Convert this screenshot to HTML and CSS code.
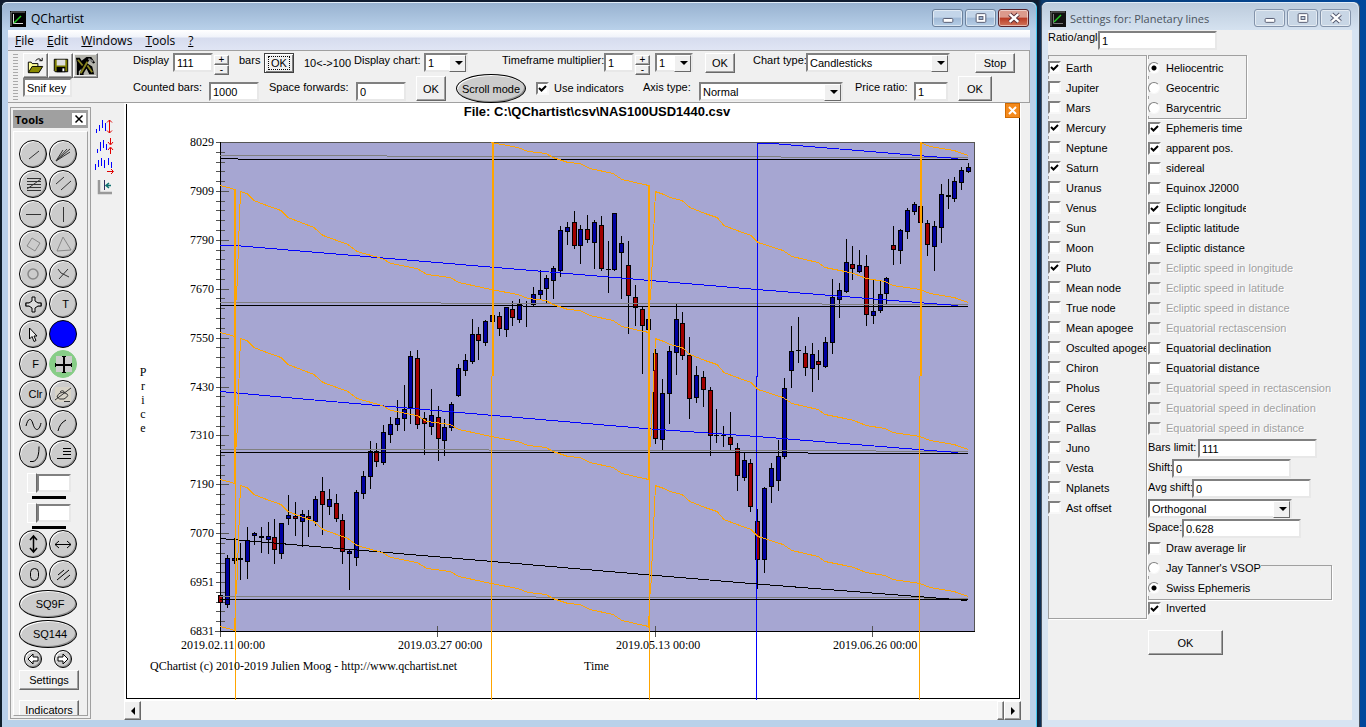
FILE: index.html
```html
<!DOCTYPE html>
<html lang="en">
<head>
    <meta charset="utf-8">
    <title>QChartist</title>
    <link rel="stylesheet" href="styles.css">
</head>
<body>
    <main class="window main-window">
        <header class="titlebar">
            <svg class="app-icon" viewBox="0 0 16 16"><rect width="16" height="16" fill="#000"/><path d="M1 15V1h14" stroke="#888" fill="none"/><path d="M3.5 3v9.5H13" stroke="#ddd" fill="none"/><path d="M4 12l7-7" stroke="#2c2" stroke-width="1.5"/></svg>
            <h1>QChartist</h1>
            <div class="window-buttons">
                <button type="button" aria-label="Minimize"><svg viewBox="0 0 30 16"><rect x="10.5" y="8.5" width="10" height="4" rx="1" fill="#fff" stroke="#555a70"/></svg></button>
                <button type="button" aria-label="Maximize"><svg viewBox="0 0 30 16"><rect x="10.5" y="3.5" width="10" height="9" rx="1" fill="#fff" stroke="#555a70"/><rect x="13.5" y="6.5" width="4" height="3" fill="#9fb6d2" stroke="#555a70"/></svg></button>
                <button type="button" class="close" aria-label="Close"><svg viewBox="0 0 30 16"><path d="M11 4l9 8M20 4l-9 8" stroke="#5b3038" stroke-width="4.5"/><path d="M11 4l9 8M20 4l-9 8" stroke="#fff" stroke-width="2.5"/></svg></button>
            </div>
        </header>

        <nav class="menubar">
            <a href="#"><u>F</u>ile</a>
            <a href="#"><u>E</u>dit</a>
            <a href="#"><u>W</u>indows</a>
            <a href="#"><u>T</u>ools</a>
            <a href="#"><u>?</u></a>
        </nav>

        <section class="toolbar">
            <div class="grip"></div>
            <div class="file-tools">
                <div class="file-buttons">
                    <button type="button" class="btn" aria-label="Open"><svg viewBox="0 0 24 24"><path d="M4.5 19V8.5h3l1 1.5h6v3" fill="#ff9" stroke="#000"/><path d="M4.5 19.5l4-6.5h11l-4 6.5z" fill="#8a8a00" stroke="#000"/><path d="M12 7q4-4 6 0m1-3v3h-3" fill="none" stroke="#000"/></svg></button>
                    <button type="button" class="btn" aria-label="Save"><svg viewBox="0 0 24 24"><path d="M5.5 5.5h14v13h-13l-1-1z" fill="#7c7c00" stroke="#000"/><path d="M8 6h9v6H8z" fill="#ddd"/><path d="M8 13.5h9V19H8z" fill="#000"/><path d="M14 15h2v3h-2z" fill="#fff"/></svg></button>
                    <button type="button" class="btn" aria-label="Edit indicators"><svg viewBox="0 0 24 24"><rect x="1" y="1" width="22" height="21" fill="#b5b5ad"/><path d="M2 4h4l2 3 5-4h5l4 6-2 1-4-4-2 4 5 3 2 8h-5l-3-6-3 5v2H6l2-7-3 3v4H3V9z" fill="#000"/><path d="M4 6l5 6M7 20l7-12M14 12l5 7" stroke="#898420" stroke-width="2"/><path d="M15 5l5 3" stroke="#888" stroke-width="2"/></svg></button>
                </div>
                <input class="field snif" type="text" value="Snif key" aria-label="Snif key">
            </div>
            <div class="toolbar-rows">
                <div class="tool-row">
                    <label class="cap cap-display" for="display">Display</label>
                    <input class="field w40" id="display" type="text" value="111">
                    <div class="spin"><button type="button" class="btn">+</button><button type="button" class="btn">-</button></div>
                    <span class="cap cap-bars">bars</span>
                    <button type="button" class="btn ok default"><span>OK</span></button>
                    <span class="cap low cap-range">10&lt;-&gt;100</span>
                    <label class="cap cap-chart" for="chart">Display chart:</label>
                    <div class="select w44"><select id="chart"><option>1</option></select></div>
                    <label class="cap cap-time" for="multiplier">Timeframe multiplier:</label>
                    <input class="field w30" id="multiplier" type="text" value="1">
                    <div class="spin"><button type="button" class="btn">+</button><button type="button" class="btn">-</button></div>
                    <div class="select w38"><select aria-label="Timeframe"><option>1</option></select></div>
                    <button type="button" class="btn ok time-ok">OK</button>
                    <label class="cap cap-type" for="type">Chart type:</label>
                    <div class="select w144"><select id="type"><option>Candlesticks</option></select></div>
                    <button type="button" class="btn stop">Stop</button>
                </div>
                <div class="tool-row second">
                    <label class="cap cap-counted" for="counted">Counted bars:</label>
                    <input class="field w50" id="counted" type="text" value="1000">
                    <label class="cap cap-space" for="forwards">Space forwards:</label>
                    <input class="field w50" id="forwards" type="text" value="0">
                    <button type="button" class="btn ok tall">OK</button>
                    <button type="button" class="round scroll-mode">Scroll mode</button>
                    <label class="check use-indicators"><input type="checkbox" checked>Use indicators</label>
                    <label class="cap cap-axis" for="axis">Axis type:</label>
                    <div class="select w144"><select id="axis"><option>Normal</option></select></div>
                    <label class="cap cap-ratio" for="ratio">Price ratio:</label>
                    <input class="field w34" id="ratio" type="text" value="1">
                    <button type="button" class="btn ok tall last-ok">OK</button>
                </div>
            </div>
        </section>

        <div class="workspace">
            <aside class="palette">
                <header>Tools <button type="button" aria-label="Close tools"><svg viewBox="0 0 14 12"><path d="M3.5 2.5l7 7M10.5 2.5l-7 7" stroke="#000" stroke-width="1.5"/></svg></button></header>
                <div class="palette-grid">
                    <button type="button" class="round" aria-label="Trend line"><svg viewBox="0 0 28 28"><path d="M10 19l10-8"/></svg></button>
                    <button type="button" class="round" aria-label="Fan"><svg viewBox="0 0 28 28"><path d="M7 21L21 9M7 21L18 9M7 21L14 10M7 21l14-9"/></svg></button>
                    <button type="button" class="round" aria-label="Fibonacci"><svg viewBox="0 0 28 28"><path d="M8 8.5h14M8 11.5h14M8 14.5h14M8 17.5h14M8 20.5h14M8 19L22 9"/></svg></button>
                    <button type="button" class="round" aria-label="Channel"><svg viewBox="0 0 28 28"><path d="M7 14l8-7M12 20l10-9"/></svg></button>
                    <button type="button" class="round" aria-label="Horizontal line"><svg viewBox="0 0 28 28"><path d="M7 14.5h15"/></svg></button>
                    <button type="button" class="round" aria-label="Vertical line"><svg viewBox="0 0 28 28"><path d="M14.5 7v15"/></svg></button>
                    <button type="button" class="round faint" aria-label="Square"><svg viewBox="0 0 28 28"><path d="M8 16l5-8 8 5-5 8z"/></svg></button>
                    <button type="button" class="round faint" aria-label="Triangle"><svg viewBox="0 0 28 28"><path d="M14 7l8 13-14 1z"/></svg></button>
                    <button type="button" class="round faint" aria-label="Circle"><svg viewBox="0 0 28 28"><circle cx="14" cy="14" r="5" stroke-width="1.5"/></svg></button>
                    <button type="button" class="round" aria-label="Cross"><svg viewBox="0 0 28 28"><path d="M9 9l3 4 8 4M19 9l-9 10"/></svg></button>
                    <button type="button" class="round" aria-label="Cycle star"><svg viewBox="0 0 28 28"><path d="M6 14.5h6M17 14.5h6" stroke="#555" stroke-width="4"/><path d="M13 7h3v4l3 2h3v3h-3l-3 2v4h-3v-4l-3-2H7v-3h3l3-2z" fill="#ddd" stroke="#000"/></svg></button>
                    <button type="button" class="round letter">T</button>
                    <button type="button" class="round" aria-label="Pointer"><svg viewBox="0 0 28 28"><path d="M10.5 8v11l2.5-2.5 2 5 2-1-2-4.5h3z" fill="#eee" stroke="#000"/></svg></button>
                    <button type="button" class="round blue" aria-label="Color"></button>
                    <button type="button" class="round letter">F</button>
                    <button type="button" class="round green" aria-label="Crosshair"><svg viewBox="0 0 28 28"><rect x="7" y="6" width="16" height="16" fill="#ccc" stroke="none"/><path d="M15 6v17M6 15h17" stroke="#000" stroke-width="2"/><path d="M13 6.5h4M13 22.5h4M6.5 13v4M22.5 13v4" stroke="#000"/></svg></button>
                    <button type="button" class="round letter">Clr</button>
                    <button type="button" class="round" aria-label="Eraser"><svg viewBox="0 0 28 28"><rect x="6" y="7" width="16" height="15" fill="#d8d4c8" stroke="none"/><path d="M8 17q2-6 8-4t-1 6q-5 1-7-2zM11 12q3-3 5 1M6 20L22 8M15 21.5h6"/></svg></button>
                    <button type="button" class="round" aria-label="Sine"><svg viewBox="0 0 28 28"><path d="M7 16c2-8 5-9 7-2s6 8 8-1" stroke="#000"/></svg></button>
                    <button type="button" class="round" aria-label="Arc"><svg viewBox="0 0 28 28"><path d="M9 21c1-5 4-9 8-11" stroke="#000"/></svg></button>
                    <button type="button" class="round" aria-label="Curve"><svg viewBox="0 0 28 28"><path d="M11 21.5h3c5-1 6-8 6-15" stroke="#000"/></svg></button>
                    <button type="button" class="round" aria-label="Levels"><svg viewBox="0 0 28 28"><path d="M14 8.5h8M14 11.5h8M14 14.5h8M8 18.5h14" stroke="#000"/></svg></button>

                    <div class="thickness"><input type="range" aria-label="Line width" value="0"><input class="field" type="text" aria-label="Line width value"><div class="stroke-sample"></div></div>
                    <div class="thickness"><input type="range" aria-label="Border width" value="0"><input class="field" type="text" aria-label="Border width value"><div class="stroke-sample"></div></div>

                    <button type="button" class="round" aria-label="Stretch vertically"><svg viewBox="0 0 28 28"><path d="M14.5 6v16M11 10l3.5-4L18 10M11 18l3.5 4 3.5-4" stroke="#000" stroke-width="1.5"/></svg></button>
                    <button type="button" class="round" aria-label="Stretch horizontally"><svg viewBox="0 0 28 28"><path d="M6 14.5h16M10 11l-4 3.5 4 3.5M18 11l4 3.5-4 3.5" stroke="#000"/></svg></button>
                    <button type="button" class="round" aria-label="Ellipse"><svg viewBox="0 0 28 28"><rect x="11.5" y="8.5" width="8" height="12" rx="4" stroke="#000"/></svg></button>
                    <button type="button" class="round" aria-label="Parallel lines"><svg viewBox="0 0 28 28"><path d="M9 15l6-5M8 20L20 10M15 20l6-5" stroke="#000"/></svg></button>
                    <button type="button" class="round wide">SQ9F</button>
                    <button type="button" class="round wide">SQ144</button>
                    <button type="button" class="round small" aria-label="Previous"><svg viewBox="0 0 18 18"><path d="M4 9l5-5v3h5v4H9v3z" fill="#fff" stroke="#000"/></svg></button>
                    <button type="button" class="round small" aria-label="Next"><svg viewBox="0 0 18 18"><path d="M14 9L9 4v3H4v4h5v3z" fill="#fff" stroke="#000"/></svg></button>
                    <button type="button" class="btn palette-btn">Settings</button>
                    <button type="button" class="btn palette-btn indicators">Indicators</button>
                </div>
            </aside>

            <div class="zoom-tools">
                <button type="button" aria-label="Expand price"><svg viewBox="0 0 20 20"><path d="M1.500 12v4M4.500 8v6M7.500 3v8M10.500 6v8" stroke="#00f"/><path d="M14.500 3v13M12 5.500L14.500 3 17 5.500M12 13.500l2.500 2.500 2.500-2.500" stroke="#e00000"/></svg></button>
                <button type="button" aria-label="Compress price"><svg viewBox="0 0 20 20"><path d="M2.500 12v4M5.500 5v9M8.500 3v8M11.500 7v6" stroke="#00f"/><path d="M15.500 1v6M13 5l2.500 3L18 5M15.500 17v-6M13 13l2.500-3 2.500 3" stroke="#e00000"/></svg></button>
                <button type="button" aria-label="Shift time"><svg viewBox="0 0 20 20"><path d="M.5 7v6M3.500 3v7M6.500 1v8M9.500 3v8M13.500 1v7M16.500 5v6" stroke="#00f"/><path d="M12 14.500h6M16 12l2.500 2.500L16 17" stroke="#e00000"/></svg></button>
                <button type="button" aria-label="Fit axis"><svg viewBox="0 0 20 20"><path d="M4 3v13h13" stroke="#999" stroke-width="2.500"/><path d="M9.500 3v10" stroke="#303060"/><path d="M16 8.500h-5M14 6l-3 2.500 3 2.500" stroke="#107070" stroke-width="1.500"/></svg></button>
            </div>

            <div class="chart-area">
                <div class="chart-pane">
                    <svg id="chart-canvas" viewBox="124 103 897 598" role="img" aria-label="NAS100USD1440 price chart">
                        <path class="ink" d="M126.500 104V698.500H1019.500V117"/>
                        <rect x="220" y="142" width="755" height="489" fill="#a6a6d2"/>
                        <path class="edge" d="M216 142.500H974.500V631"/>
                        <g id="ticks"></g>
                        <path class="ink" d="M220.500 142V631M220 631.500H975"/>
                        <g id="candles"></g>
                        <path class="planet" d="M220 155.500H387M387 156.500H781M781 157.500H968M220 302.500H441M441 303.500H822M822 304.500H968M220 449.500H489M489 450.500H876M876 451.500H968M220 596.500H536M536 597.500H924M924 598.500H968"/>
                        <path class="planet blue-line" d="M756.500 700V376.500H757.500V143.500H773L930 156.500L958 158.500M220 245.500H235L757 289.500L930 303.500L958 305.500M220 391.500L320 400.500L645 428.500L757 436.500L930 450.500L958 452.500"/>
                        <path class="ink" d="M220 158.500H238M238 159.500H968M220 305.500H523M523 306.500H968M220 452.500H808M808 453.500H968M220 599.500H968M220 538.500L440 557L650 575L757 584L930 597.500L967 600.500"/>
                        <g id="earth-lines"></g>
                        <path class="orange-line" d="M235.500 480V700M491.500 376V700M649.500 478V700M919.500 376V700"/>
                        <path class="orange-line thick" d="M235 189V483M234.500 618V631M492.500 142V376M649 185V480M649 616V628M920.500 142V376"/>
                        <g id="slants" class="orange-line"></g>
                        <text class="chart-title" x="597" y="116" text-anchor="middle">File: C:\QChartist\csv\NAS100USD1440.csv</text>
                        <g id="labels" class="axis-text"></g>
                        <text class="axis-text" x="150" y="670">QChartist (c) 2010-2019 Julien Moog - http://www.qchartist.net</text>
                        <text class="axis-text" x="584" y="670">Time</text>
                    </svg>
                    <button type="button" class="chart-close" aria-label="Close chart"><svg viewBox="0 0 13 13"><path d="M3 3l7 7M10 3l-7 7" stroke="#fff" stroke-width="2"/></svg></button>
                </div>
                <div class="scrollbar">
                    <button type="button" class="btn" aria-label="Scroll left"><svg viewBox="0 0 8 8"><path d="M6 0v8L2 4z"/></svg></button>
                    <div class="track"></div>
                    <div class="btn thumb"></div>
                    <button type="button" class="btn" aria-label="Scroll right"><svg viewBox="0 0 8 8"><path d="M2 0v8l4-4z"/></svg></button>
                </div>
            </div>
        </div>
    </main>

    <aside class="window settings-window">
        <header class="titlebar">
            <svg class="app-icon" viewBox="0 0 16 16"><rect width="16" height="16" fill="#111"/><path d="M1 15V1h14" stroke="#777" fill="none"/><path d="M3.5 3v9.5H13" stroke="#777" fill="none"/><path d="M4 11l7-7" stroke="#2c2" stroke-width="1.5"/></svg>
            <h2>Settings for: Planetary lines</h2>
            <div class="window-buttons">
                <button type="button" aria-label="Minimize"><svg viewBox="0 0 30 16"><rect x="10.5" y="8.5" width="10" height="4" rx="1" fill="#fff" stroke="#555a70"/></svg></button>
                <button type="button" aria-label="Maximize"><svg viewBox="0 0 30 16"><rect x="10.5" y="3.5" width="10" height="9" rx="1" fill="#fff" stroke="#555a70"/><rect x="13.5" y="6.5" width="4" height="3" fill="#c5d3e2" stroke="#555a70"/></svg></button>
                <button type="button" aria-label="Close"><svg viewBox="0 0 30 16"><path d="M11 4l9 8M20 4l-9 8" stroke="#555a70" stroke-width="4.5"/><path d="M11 4l9 8M20 4l-9 8" stroke="#fff" stroke-width="2.5"/></svg></button>
            </div>
        </header>
        <form class="settings">
            <div class="line ratio-line">
                <label for="angle">Ratio/angle:</label>
                <input class="field w119" id="angle" type="text" value="1">
            </div>
            <div class="columns">
                <fieldset class="planets">
                    <label class="check"><input type="checkbox" checked>Earth</label>
                    <label class="check"><input type="checkbox">Jupiter</label>
                    <label class="check"><input type="checkbox">Mars</label>
                    <label class="check"><input type="checkbox" checked>Mercury</label>
                    <label class="check"><input type="checkbox">Neptune</label>
                    <label class="check"><input type="checkbox" checked>Saturn</label>
                    <label class="check"><input type="checkbox">Uranus</label>
                    <label class="check"><input type="checkbox">Venus</label>
                    <label class="check"><input type="checkbox">Sun</label>
                    <label class="check"><input type="checkbox">Moon</label>
                    <label class="check"><input type="checkbox" checked>Pluto</label>
                    <label class="check"><input type="checkbox">Mean node</label>
                    <label class="check"><input type="checkbox">True node</label>
                    <label class="check"><input type="checkbox">Mean apogee</label>
                    <label class="check"><input type="checkbox">Osculted apogee</label>
                    <label class="check"><input type="checkbox">Chiron</label>
                    <label class="check"><input type="checkbox">Pholus</label>
                    <label class="check"><input type="checkbox">Ceres</label>
                    <label class="check"><input type="checkbox">Pallas</label>
                    <label class="check"><input type="checkbox">Juno</label>
                    <label class="check"><input type="checkbox">Vesta</label>
                    <label class="check"><input type="checkbox">Nplanets</label>
                    <label class="check"><input type="checkbox">Ast offset</label>
                </fieldset>
                <div class="options">
                    <fieldset class="center">
                        <label class="check"><input type="radio" name="center" checked>Heliocentric</label>
                        <label class="check"><input type="radio" name="center">Geocentric</label>
                        <label class="check"><input type="radio" name="center">Barycentric</label>
                    </fieldset>
                    <label class="check clip"><input type="checkbox" checked>Ephemeris time</label>
                    <label class="check clip"><input type="checkbox" checked>apparent pos.</label>
                    <label class="check clip"><input type="checkbox">sidereal</label>
                    <label class="check clip"><input type="checkbox">Equinox J2000</label>
                    <label class="check clip"><input type="checkbox" checked>Ecliptic longitude</label>
                    <label class="check clip"><input type="checkbox">Ecliptic latitude</label>
                    <label class="check clip"><input type="checkbox">Ecliptic distance</label>
                    <label class="check off"><input type="checkbox" disabled>Ecliptic speed in longitude</label>
                    <label class="check off"><input type="checkbox" disabled>Ecliptic speed in latitude</label>
                    <label class="check off"><input type="checkbox" disabled>Ecliptic speed in distance</label>
                    <label class="check off"><input type="checkbox" disabled>Equatorial rectascension</label>
                    <label class="check"><input type="checkbox">Equatorial declination</label>
                    <label class="check"><input type="checkbox">Equatorial distance</label>
                    <label class="check off"><input type="checkbox" disabled>Equatorial speed in rectascension</label>
                    <label class="check off"><input type="checkbox" disabled>Equatorial speed in declination</label>
                    <label class="check off"><input type="checkbox" disabled>Equatorial speed in distance</label>
                    <div class="line"><label class="cap-50" for="limit">Bars limit:</label><input class="field w119" id="limit" type="text" value="111"></div>
                    <div class="line"><label class="cap-24" for="shift">Shift:</label><input class="field w119" id="shift" type="text" value="0"></div>
                    <div class="line"><label class="cap-44" for="avg">Avg shift:</label><input class="field w119" id="avg" type="text" value="0"></div>
                    <div class="line"><div class="select w144"><select aria-label="Projection"><option>Orthogonal</option></select></div></div>
                    <div class="line"><label class="cap-34" for="space">Space:</label><input class="field w119" id="space" type="text" value="0.628"></div>
                    <label class="check clip"><input type="checkbox">Draw average line</label>
                    <fieldset class="source">
                        <label class="check"><input type="radio" name="source">Jay Tanner's VSOP87</label>
                        <label class="check"><input type="radio" name="source" checked>Swiss Ephemeris</label>
                    </fieldset>
                    <label class="check clip"><input type="checkbox" checked>Inverted</label>
                    <button type="button" class="btn settings-ok">OK</button>
                </div>
            </div>
        </form>
    </aside>

    <script src="script.js"></script>
</body>
</html>
```

FILE: styles.css
```css
* {
    box-sizing: border-box;
}
body {
    display: flex;
    height: 100vh;
    margin: 0;
    padding-right: 6px;
    gap: 4px;
    overflow: hidden;
    background: linear-gradient(90deg, #101c30 0 1038px, #0b3a6c 1042px, #00479c 100%);
    font: 11px "Liberation Sans", Arial, sans-serif;
    color: #000;
}
button, input, select {
    margin: 0;
    padding: 0;
    font: inherit;
    color: inherit;
}
svg {
    display: block;
    fill: none;
}
fieldset {
    margin: 0;
    padding: 0;
    min-width: 0;
    border: 1px solid #a0a0a0;
    box-shadow: 1px 1px 0 #fff;
}

/* windows */
.window {
    display: flex;
    flex-direction: column;
    margin-top: 2px;
    padding: 0 7px 7px 6px;
    border-radius: 6px 6px 0 0;
}
.main-window {
    flex: 1;
    min-width: 0;
    background: #b9d1ea;
    border: solid #10202c;
    border-width: 0 0 0 2px;
    border-right: 1px solid #45c8f0;
    padding-right: 6px;
}
.settings-window {
    width: 319px;
    background: #d7e4f2;
    border: 1px solid #4a5562;
    border-width: 0 1px;
}
.titlebar {
    display: flex;
    align-items: center;
    gap: 5px;
    height: 28px;
    flex: none;
    margin: 0 -6px;
    padding: 4px 0 0 8px;
    border-top: 1px solid #e2edf8;
    border-radius: 6px 6px 0 0;
    font-family: "Open Sans", sans-serif;
    background: linear-gradient(#98b2d0, #b9d1ea);
}
.settings-window .titlebar {
    padding-left: 8px;
    gap: 4px;
    background: linear-gradient(#bccbdc, #d5e2f0);
    color: #4b545e;
}
.titlebar h1, .titlebar h2 {
    margin: 0;
    font-size: 12px;
    font-weight: normal;
}
.titlebar h2 {
    font-size: 11px;
}
.app-icon {
    width: 16px;
    height: 16px;
}
.window-buttons {
    display: flex;
    gap: 2px;
    margin: 0 7px 0 auto;
    padding-bottom: 2px;
}
.window-buttons button {
    width: 31px;
    height: 18px;
    border: 1px solid #6c819c;
    border-radius: 3px;
    background: linear-gradient(#c3d5e9 45%, #a0b9d6 50%, #b6cee6);
    box-shadow: inset 0 0 0 1px rgba(255, 255, 255, 0.5);
}
.window-buttons svg {
    width: 29px;
    height: 16px;
}
.settings-window .window-buttons button {
    background: #c8d6e5;
    border-color: #8393aa;
}
.window-buttons .close {
    background: linear-gradient(#dc9a8c 45%, #b93a24 50%, #d0755c);
    border-color: #58222a;
}

.menubar {
    display: flex;
    align-items: center;
    gap: 13px;
    height: 20px;
    flex: none;
    padding-left: 7px;
    background: linear-gradient(#fff, #f0f3fa 35%, #d6dcee 40%, #e0e5f4);
    font: 12px "Open Sans", sans-serif;
}
.menubar a {
    color: #000;
    text-decoration: none;
}

/* classic controls */
.btn {
    border: 1px solid #696969;
    border-color: #fff #696969 #696969 #fff;
    background: #f0f0f0;
    box-shadow: inset -1px -1px 0 #a0a0a0;
    text-align: center;
}
.field {
    height: 19px;
    border: 2px solid #808080;
    border-color: #808080 #e8e8e8 #e8e8e8 #808080;
    border-radius: 0;
    background: #fff;
    padding: 0 2px;
    outline: none;
}
.select {
    position: relative;
    flex: none;
    height: 19px;
}
.select select {
    width: 100%;
    height: 100%;
    appearance: none;
    border: 2px solid #808080;
    border-color: #808080 #e8e8e8 #e8e8e8 #808080;
    border-radius: 0;
    background: #fff;
    padding: 0 2px;
}
.select::before {
    content: "";
    position: absolute;
    top: 2px;
    right: 2px;
    width: 15px;
    height: 15px;
    border: 1px solid #696969;
    border-color: #fff #696969 #696969 #fff;
    background: #f0f0f0;
    pointer-events: none;
}
.select::after {
    content: "";
    position: absolute;
    top: 8px;
    right: 5px;
    border: 4px solid transparent;
    border-top-color: #000;
    border-bottom: 0;
    pointer-events: none;
}
.check {
    display: flex;
    align-items: center;
    gap: 5px;
    height: 20px;
    white-space: nowrap;
}
.check input {
    appearance: none;
    flex: none;
    width: 13px;
    height: 13px;
    border: 2px solid #808080;
    border-color: #808080 #f8f8f8 #f8f8f8 #808080;
    background: #fff;
}
.check input[type="checkbox"]:checked {
    background: #fff url("data:image/svg+xml,%3Csvg xmlns='http://www.w3.org/2000/svg' viewBox='0 0 9 9'%3E%3Cpath d='M1 4l2.500 2.500L8 2' fill='none' stroke='%23000' stroke-width='2'/%3E%3C/svg%3E");
}
.check input[type="radio"] {
    width: 12px;
    height: 12px;
    margin-right: 1px;
    border-width: 1px;
    border-radius: 50%;
}
.check input[type="radio"]:checked {
    background: radial-gradient(#000 0 2px, #fff 3px);
}
.check input:disabled {
    background: #f0f0f0;
}
.check.off {
    color: #a0a0a0;
    text-shadow: 1px 1px 0 #fff;
}

.w30 { width: 30px; }
.w34 { width: 34px; }
.w38 { width: 38px; }
.w40 { width: 40px; }
.w44 { width: 44px; }
.w50 { width: 50px; }
.w119 { width: 119px; }
.w144 { width: 144px; }

/* toolbar */
.toolbar {
    display: flex;
    height: 53px;
    flex: none;
    padding-top: 2px;
    background: #f0f0f0;
    border: 1px solid #a0a0a0;
    border-left: 0;
    white-space: nowrap;
}
.grip {
    width: 5px;
    height: 46px;
    margin: 1px 5px 0;
    background: repeating-linear-gradient(#aaa 0 1px, #f0f0f0 1px 3px);
}
.file-tools {
    width: 110px;
    flex: none;
}
.file-buttons {
    display: flex;
}
.file-buttons .btn {
    width: 25px;
    height: 25px;
}
.file-buttons svg {
    width: 23px;
    height: 23px;
}
.snif {
    width: 49px;
}
.tool-row {
    display: flex;
    height: 24px;
}
.tool-row > * {
    flex: none;
}
.cap {
    padding-top: 1px;
    line-height: 12px;
}
.cap.low {
    padding-top: 4px;
}
.cap-display { width: 40px; }
.cap-bars { width: 35px; padding-left: 10px; }
.cap-range { width: 60px; padding-left: 10px; }
.cap-chart { width: 70px; }
.cap-time { width: 136px; padding-left: 34px; }
.cap-type { width: 71px; padding-left: 18px; }
.cap-counted { width: 76px; }
.cap-space { width: 97px; padding-left: 10px; }
.cap-axis { width: 66px; padding-left: 10px; }
.cap-ratio { width: 71px; padding-left: 12px; }
.spin {
    display: flex;
    flex-direction: column;
    width: 15px;
    margin: 2px 0 0 1px;
}
.spin .btn {
    height: 10px;
    font-size: 10px;
    line-height: 8px;
}
.spin + .select {
    margin-left: 5px;
}
.ok {
    width: 30px;
    height: 20px;
}
.ok.default {
    border-color: #404040;
    box-shadow: inset 1px 1px 0 #fff, inset -1px -1px 0 #808080;
}
.ok.default span {
    border: 1px dotted #000;
    padding: 0 2px;
}
.time-ok {
    margin-left: 12px;
}
.stop {
    width: 40px;
    height: 20px;
    margin-left: 25px;
}
.second {
    align-items: flex-start;
    padding-top: 4px;
}
.second .cap {
    padding-top: 0;
}
.second .field, .second .select {
    margin-top: 1px;
}
.tall {
    height: 25px;
    margin: -5px 10px 0 10px;
}
.last-ok {
    width: 34px;
}
.round {
    border: 1px solid #000;
    border-radius: 50%;
    background: #ccc;
    box-shadow: inset 1px 1px 0 #fff, inset -1px -1px 0 #909090;
}
.scroll-mode {
    width: 70px;
    height: 29px;
    margin-top: -7px;
}
.use-indicators {
    width: 97px;
    height: 14px;
    margin-left: 10px;
}

/* workspace */
.workspace {
    display: flex;
    flex: 1;
    min-height: 0;
    padding-left: 2px;
    background: #f0f0f0;
}
.palette {
    display: flex;
    flex-direction: column;
    width: 81px;
    flex: none;
    margin: 4px 0 1px;
    padding: 2px;
    border: 1px solid #a0a0a0;
    overflow: hidden;
}
.palette header {
    display: flex;
    justify-content: space-between;
    align-items: center;
    height: 18px;
    flex: none;
    padding: 0 2px;
    background: #a0a0a0;
    font: bold 11px "Open Sans", sans-serif;
}
.palette header button {
    width: 14px;
    height: 12px;
    border: 0;
    background: #fff;
}
.palette-grid {
    display: grid;
    grid-template-columns: 28px 28px;
    gap: 2px;
    flex: 1;
    align-content: start;
    min-height: 0;
    margin-top: 3px;
    padding: 8px 0 0 5px;
    border: 1px solid #a0a0a0;
    border-left-color: #fff;
    border-top-color: #fff;
    overflow: hidden;
}
.palette-grid .round {
    width: 28px;
    height: 28px;
}
.round svg {
    width: 28px;
    height: 28px;
    margin: -1px;
    stroke: #333;
}
.round.faint svg {
    stroke: #888;
}
.palette-grid .letter {
    padding-left: 5px;
}
.palette-grid .blue {
    background: #00f;
    box-shadow: none;
}
.palette-grid .green {
    background: #87cd87;
    border-color: #87cd87;
    box-shadow: none;
}
.palette-grid .wide {
    grid-column: span 2;
    width: 58px;
    padding-left: 4px;
}
.palette-grid .small {
    justify-self: center;
    width: 18px;
    height: 18px;
}
.small svg {
    width: 18px;
    height: 18px;
}
.thickness {
    display: grid;
    grid-template-columns: 10px 34px;
    grid-template-rows: 23px 3px;
    grid-column: span 2;
    height: 28px;
    padding: 3px 0 0 8px;
}
.thickness .field {
    width: 34px;
    height: 18px;
    margin-top: 1px;
}
.thickness input[type="range"] {
    appearance: none;
    width: 10px;
    height: 20px;
    background: #f0f0f0;
    border: 1px solid #fff;
    border-right-color: #696969;
}
.thickness input[type="range"]::-webkit-slider-thumb {
    appearance: none;
    width: 1px;
    height: 1px;
}
.stroke-sample {
    grid-column: span 2;
    width: 34px;
    margin-left: 5px;
    background: #000;
}
.palette-btn {
    grid-column: span 2;
    width: 60px;
    height: 20px;
}
.indicators {
    margin-top: 8px;
}

.zoom-tools {
    display: flex;
    flex-direction: column;
    width: 33px;
    flex: none;
    padding: 14px 0 0 4px;
}
.zoom-tools button {
    width: 20px;
    height: 20px;
    border: 0;
    background: none;
}
.zoom-tools svg {
    width: 20px;
    height: 20px;
}

.chart-area {
    display: flex;
    flex-direction: column;
    flex: 1;
    min-width: 0;
    margin-right: 9px;
}
.chart-pane {
    position: relative;
    flex: 1;
    min-height: 0;
    background: #fff;
}
.chart-pane > svg {
    width: 100%;
    height: 100%;
}
#chart-canvas path, #chart-canvas rect {
    shape-rendering: crispEdges;
}
.ink { stroke: #000; }
.edge { stroke: #555; }
.planet { stroke: #808080; }
.blue-line { stroke: #00f; }
.orange-line { stroke: #ffa500; }
.thick { stroke-width: 2; }
.chart-title {
    fill: #000;
    font-size: 13px;
    font-weight: bold;
}
.axis-text {
    fill: #000;
    font: 12px "Liberation Serif", "Times New Roman", serif;
}
.chart-close {
    position: absolute;
    top: 0;
    right: 1px;
    width: 15px;
    height: 15px;
    border: 1px solid #d06a00;
    background: #f48a1c;
}
.chart-close svg {
    width: 13px;
    height: 13px;
}
.scrollbar {
    display: flex;
    height: 19px;
    flex: none;
}
.scrollbar button {
    width: 17px;
}
.scrollbar svg {
    width: 8px;
    height: 8px;
    margin: auto;
    fill: #000;
}
.track {
    flex: 1;
    background: #f7f7f7;
}
.thumb {
    width: 7px;
}

/* planetary lines settings */
.settings {
    flex: 1;
    background: #f0f0f0;
}
.line {
    display: flex;
    height: 20px;
}
.line label {
    overflow: hidden;
    padding-top: 3px;
    line-height: 12px;
    white-space: nowrap;
}
.line .field, .line .select {
    margin-top: 1px;
}
.ratio-line label {
    width: 50px;
    padding-top: 1px;
}
.cap-24 { width: 24px; }
.cap-34 { width: 34px; }
.cap-44 { width: 44px; }
.cap-50 { width: 50px; }
.columns {
    display: flex;
    align-items: flex-start;
    gap: 1px;
    margin-top: 5px;
}
.planets {
    width: 99px;
    height: 564px;
    padding-top: 3px;
}
fieldset .check {
    height: 17px;
    margin: 0 0 3px -1px;
    overflow: hidden;
    background: #f0f0f0;
}
.options {
    flex: 1;
}
.center {
    width: 99px;
    height: 64px;
    padding-top: 3px;
    margin-bottom: -1px;
}
.clip {
    width: 98px;
    overflow: hidden;
}
.source {
    width: 184px;
    height: 35px;
    margin: 7px 0 -2px;
}
.source .check {
    position: relative;
    top: -7px;
    width: 113px;
}
.settings-ok {
    width: 75px;
    height: 25px;
    margin-top: 12px;
}
```

FILE: script.js
```js
const NS = 'http://www.w3.org/2000/svg';

// one row per bar: high, body top, body bottom, low, direction (1 = up, 0 = down)
const bars = [
    [595,595,603,603,0],[555,558,605,607,1],[538,558,561,563,1],[543,558,560,579,1],[527,540,562,578,1],
    [532,533,536,544,1],[527,536,538,552,1],[522,536,540,553,1],[519,537,550,563,0],[523,523,554,558,1],
    [495,515,519,524,1],[502,516,519,535,0],[510,514,522,546,1],[510,516,519,536,0],[496,499,522,525,1],
    [477,491,505,534,0],[489,499,507,514,1],[494,503,519,521,0],[514,520,552,563,0],[550,551,554,589,1],
    [490,492,558,565,1],[471,476,494,498,1],[441,451,477,488,1],[443,451,462,466,0],[425,432,463,464,1],
    [417,424,435,442,1],[400,418,425,430,1],[385,409,419,430,1],[351,356,408,423,1],[350,358,425,428,0],
    [412,418,424,454,0],[389,415,427,434,1],[406,417,439,460,0],[419,427,441,455,1],[402,404,428,430,1],
    [364,368,396,396,1],[354,360,371,375,1],[319,334,362,363,1],[327,334,341,359,0],[320,321,343,345,1],
    [315,315,322,322,1],[312,316,329,335,0],[307,307,330,336,1],[301,309,318,325,0],[299,304,320,322,1],
    [301,306,307,326,1],[287,294,305,306,1],[270,290,295,298,1],[275,278,289,302,1],[266,268,281,298,1],
    [226,230,271,276,1],[222,227,232,244,1],[211,222,246,248,0],[225,229,246,263,1],[215,229,240,242,0],
    [220,222,243,268,1],[216,225,269,270,0],[241,269,270,292,1],[213,213,270,270,1],[236,243,253,298,1],
    [241,265,296,333,0],[285,297,308,325,0],[307,309,326,373,0],[319,319,330,330,1],[349,353,439,443,0],
    [379,393,440,449,1],[346,351,394,423,1],[304,319,353,374,1],[312,323,356,359,0],[337,355,399,418,0],
    [366,375,398,402,1],[371,377,390,406,0],[387,390,436,455,0],[409,435,436,442,1],[426,435,436,446,1],
    [412,437,445,450,0],[443,448,476,490,0],[453,460,478,480,1],[459,463,507,511,0],[509,521,560,588,0],
    [487,488,560,572,1],[463,468,487,502,1],[440,456,481,490,1],[378,388,457,458,1],[326,351,371,387,1],
    [317,350,351,362,1],[346,353,368,375,0],[343,354,369,391,1],[350,361,365,379,0],[337,342,367,367,1],
    [279,297,343,353,1],[283,290,300,317,1],[239,262,292,292,1],[246,264,269,279,0],[250,265,272,272,1],
    [255,266,315,325,0],[280,311,316,323,1],[281,294,311,312,1],[277,278,294,303,1],[226,245,250,264,0],
    [229,230,251,263,1],[208,210,232,238,1],[202,204,212,214,1],[206,206,223,223,0],[220,223,245,255,0],
    [221,226,247,270,1],[184,194,228,242,1],[179,195,197,208,1],[177,181,199,201,1],[167,170,183,189,1],
    [163,167,172,172,1]
];

// longitude curves, repeated every CYCLE pixels
const CYCLE = 147;
const lead = [[220,185],[228,187],[235,189]];
const first = [[240,191],[247,193],[254,200],[264,204],[281,210],[288,217],[314,227],[323,235],[348,244],[357,251],
    [382,258],[391,263],[417,268],[427,274],[450,277],[459,282],[491,289],[518,294],[528,298],[546,300],[553,304],
    [568,309],[580,310],[590,315],[613,320],[622,326],[644,331],[649,332]];
const second = [[655,191],[664,194],[670,197],[682,200],[690,207],[705,213],[717,217],[724,225],[737,230],[751,235],
    [758,242],[783,250],[792,256],[818,262],[825,267],[845,271],[854,273],[866,278],[885,281],[893,285],[920,289],
    [930,293],[954,297],[968,302]];

function add(parent, name, attrs, text) {
    const el = document.createElementNS(NS, name);
    for (const key in attrs) el.setAttribute(key, attrs[key]);
    if (text) el.textContent = text;
    document.getElementById(parent).appendChild(el);
}

bars.forEach(([high, top, bottom, low, up], i) => {
    const x = Math.round(220 + i * 6.8);
    add('candles', 'rect', { x: x, y: high, width: 1, height: low - high + 1, fill: '#000' });
    add('candles', 'rect', { x: x - 2, y: top, width: 5, height: Math.max(bottom - top, 1), fill: '#000' });
    if (bottom - top > 2) {
        add('candles', 'rect', { x: x - 1, y: top + 1, width: 3, height: bottom - top - 2, fill: up ? '#0000a0' : '#a00000' });
    }
});

function curve(points, shift) {
    const visible = points.map(([x, y]) => [x, y + shift + 0.5]).filter(p => p[1] >= 142 && p[1] < 631);
    add('earth-lines', 'path', { class: 'orange-line', d: 'M' + visible.map(p => p.join(' ')).join('L') });
}
[0, 1, 2, 3].forEach(n => curve(lead, n * CYCLE));
[-1, 0, 1, 2].forEach(n => {
    curve(first, n * CYCLE);
    curve(second, n * CYCLE);
});
[0, 1, 2].forEach(n => {
    const y = 191 + n * CYCLE;
    add('slants', 'path', { d: `M240.500 ${y}L236.500 ${y + 109}M655.500 ${y}L650.500 ${y + 109}` });
});

// price axis
const prices = [8029, 7909, 7790, 7670, 7550, 7430, 7310, 7190, 7070, 6951, 6831];
for (let i = 0; i <= 50; i++) {
    const y = Math.round(142 + i * 9.78) + 0.5;
    const major = i % 5 === 0;
    if (i > 0 && i < 50) add('ticks', 'path', { class: 'edge', d: `M216 ${y}H${major ? 229 : 225}` });
    if (major) add('labels', 'text', { x: 214, y: y + 3, 'text-anchor': 'end' }, String(prices[i / 5]));
}
add('ticks', 'path', { class: 'edge', d: 'M215 631.500H220M220.500 631V637' });

// time axis
[['2019.02.11 00:00', 220], ['2019.03.27 00:00', 437], ['2019.05.13 00:00', 655], ['2019.06.26 00:00', 872]].forEach(([text, x]) => {
    add('labels', 'text', { x: x - 39, y: 649 }, text);
    if (x > 220) add('ticks', 'path', { class: 'edge', d: `M${x}.5 626V637` });
});
[...'Price'].forEach((c, i) => add('labels', 'text', { x: 143, y: 376 + i * 14, 'text-anchor': 'middle' }, c));
```
